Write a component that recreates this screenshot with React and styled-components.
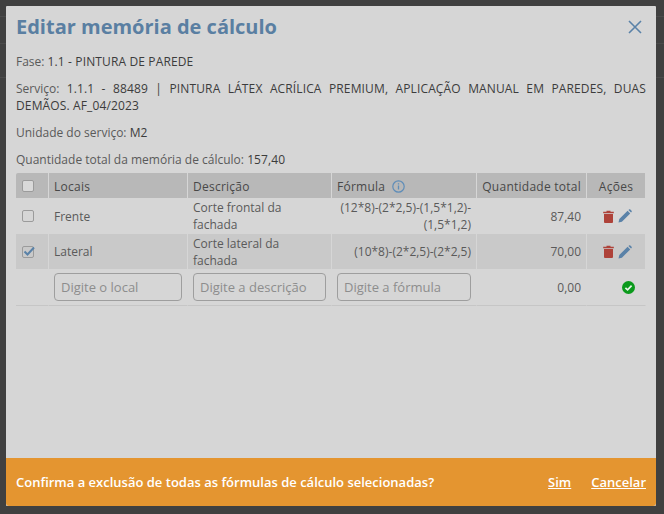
import React from "react";
import styled, { createGlobalStyle } from "styled-components";

const Global = createGlobalStyle`
  html, body { margin: 0; padding: 0; height: 100%; overflow: hidden; background: #3f3f3f; }
  * { box-sizing: border-box; }
`;
const Backdrop = styled.div`
  width: 664px; height: 514px; padding: 6px 8px 8px 6px;
  background:
    linear-gradient(#4b4b4b, #4b4b4b) 0 16px / 100% 1px no-repeat,
    linear-gradient(#4b4b4b, #4b4b4b) 0 43px / 100% 1px no-repeat,
    linear-gradient(#4b4b4b, #4b4b4b) 0 77px / 100% 1px no-repeat,
    #404040;
  font-family: "Open Sans", sans-serif; font-size: 12px; line-height: 17px; color: #5a5a5a;
`;
const Modal = styled.div`
  width: 650px; height: 500px; display: flex; flex-direction: column; background: #d6d6d6; border-radius: 1px;
`;
const Body = styled.div`flex: 1; padding: 8px 10px 0;`;
const Header = styled.div`display: flex; justify-content: space-between; align-items: center; height: 25px; margin-bottom: 14px;`;
const Title = styled.h1`margin: 0; font-size: 20px; line-height: 25px; font-weight: 700; color: #5a7fa2;`;
const Close = styled.button`border: 0; background: none; padding: 0; margin-right: 4px; width: 14px; height: 14px; display: flex; svg { display: block; }`;
const Info = styled.p`margin: 0 0 10px; text-align: ${p => p.$justify ? "justify" : "left"};`;
const Strong = styled.span`font-weight: 400; letter-spacing: 0.13px; color: #3c3c3c;`;
const Table = styled.div`
  margin-top: -5px; display: grid; grid-template-columns: 33px 139px 144px 145px 110px 59px;
`;
const Cell = styled.div`
  display: flex; align-items: center; padding: 0 5px; gap: 3px;
  border-right: 1px solid #d6d6d6;
  justify-content: ${p => p.$align === "right" ? "flex-end" : p.$align === "center" ? "center" : "flex-start"};
  text-align: ${p => p.$align || "left"};
`;
const Head = styled(Cell)`
  height: 25px; padding-top: 1px; background: #b8b8b8; font-weight: 400; letter-spacing: 0.25px; color: #484848;
  &:last-child { border-right: 0; border-top-right-radius: 2px; }
  &:first-child { border-top-left-radius: 2px; }
`;
const Data = styled(Cell)`
  height: ${p => p.$shade ? 36 : 35}px; background: ${p => p.$shade ? "#c9c9c9" : "transparent"};
  border-top: 1px solid #d6d6d6;
  padding-right: ${p => p.$wrap ? 25 : 5}px;
`;
const InputCell = styled(Cell)`height: 37px; border-bottom: 1px solid #c6c6c6;`;
const Box = styled.span`
  width: 12px; height: 12px; border: 1px solid #9b9b9b; border-radius: 2px; background: ${p => p.$light ? "#d9d9d9" : "transparent"};
  position: relative; display: block; margin-left: 1px;
  svg { position: absolute; left: -1px; top: -2px; }
`;
const Input = styled.input`
  width: 100%; height: 28px; border: 1px solid #9e9e9e; border-radius: 4px; background: transparent; padding: 0 6px;
  font: 13px "Open Sans", sans-serif; color: #4a4a4a;
  &::placeholder { color: #8d8d8d; opacity: 1; }
`;
const InfoIcon = styled.svg`margin-left: 4px; display: block;`;
const Actions = styled.div`display: flex; gap: 4px; align-items: center; justify-content: center; margin-left: 3px;`;
const Check = styled.svg`margin-right: 5px; margin-top: 1px; display: block;`;
const Confirm = styled.div`
  height: 48px; background: #e49530; color: #fff; display: flex; align-items: center; padding: 0 10px;
  font-weight: 600; font-size: 13px; border-radius: 0 0 3px 3px;
`;
const Question = styled.span`flex: 1;`;
const Link = styled.a`color: #fff; text-decoration: underline; margin-left: 20px; cursor: pointer;`;

const Trash = () => (
  <svg width="11" height="13" viewBox="0 0 11 13"><path d="M3.5.8h4v1h3.3v1.4H.2V1.8h3.3zM1 4h9v8a1 1 0 0 1-1 1H2a1 1 0 0 1-1-1z" fill="#ae4239"/></svg>
);
const Pencil = () => (
  <svg width="14" height="14" viewBox="0 0 14 14"><path d="M0.5 13.5l.8-3.4L9.6 1.8l2.6 2.6-8.3 8.3zM10.4 1l.7-.6c.4-.3.9-.3 1.2 0l1.3 1.3c.3.4.3.9 0 1.2l-.6.7z" fill="#5a82a8"/></svg>
);
const Row = ({ shade, checked, local, desc, formula, total }) => (
  <>
    <Data $shade={shade}><Box>{checked && <svg width="14" height="12" viewBox="0 0 14 12"><path d="M2.5 6.5l3 3 6.5-7" fill="none" stroke="#5a82a8" strokeWidth="2"/></svg>}</Box></Data>
    <Data $shade={shade}>{local}</Data>
    <Data $shade={shade} $wrap>{desc}</Data>
    <Data $shade={shade} $align="right">{formula}</Data>
    <Data $shade={shade} $align="right">{total}</Data>
    <Data $shade={shade} $align="center"><Actions><Trash /><Pencil /></Actions></Data>
  </>
);

export default function App() {
  return (
    <Backdrop>
      <Global />
      <Modal>
        <Body>
          <Header>
            <Title>Editar memória de cálculo</Title>
            <Close aria-label="Fechar"><svg width="14" height="14" viewBox="0 0 14 14"><path d="M1 1l12 12M13 1L1 13" stroke="#5a82a8" strokeWidth="1.6" fill="none"/></svg></Close>
          </Header>
          <Info>Fase: <Strong>1.1 - PINTURA DE PAREDE</Strong></Info>
          <Info $justify>Serviço: <Strong>1.1.1 - 88489 | PINTURA LÁTEX ACRÍLICA PREMIUM, APLICAÇÃO MANUAL EM PAREDES, DUAS DEMÃOS. AF_04/2023</Strong></Info>
          <Info>Unidade do serviço: <Strong>M2</Strong></Info>
          <Info>Quantidade total da memória de cálculo: <Strong>157,40</Strong></Info>
          <Table>
            <Head><Box $light /></Head>
            <Head>Locais</Head>
            <Head>Descrição</Head>
            <Head>Fórmula
              <InfoIcon width="13" height="13" viewBox="0 0 13 13"><circle cx="6.5" cy="6.5" r="5.7" fill="none" stroke="#5f8db8" strokeWidth="1.2"/><path d="M6.5 5.5v4M6.5 3.2v1.3" stroke="#5f8db8" strokeWidth="1.3"/></InfoIcon>
            </Head>
            <Head $align="right">Quantidade total</Head>
            <Head $align="center">Ações</Head>
            <Row local="Frente" desc="Corte frontal da fachada" formula="(12*8)-(2*2,5)-(1,5*1,2)-(1,5*1,2)" total="87,40" />
            <Row shade checked local="Lateral" desc="Corte lateral da fachada" formula="(10*8)-(2*2,5)-(2*2,5)" total="70,00" />
            <InputCell />
            <InputCell><Input placeholder="Digite o local" /></InputCell>
            <InputCell><Input placeholder="Digite a descrição" /></InputCell>
            <InputCell><Input placeholder="Digite a fórmula" /></InputCell>
            <InputCell $align="right">0,00</InputCell>
            <InputCell $align="right"><Check width="13" height="13" viewBox="0 0 13 13"><circle cx="6.5" cy="6.5" r="6.5" fill="#0b9a1c"/><path d="M3.4 6.8l2.2 2.1 4-4.2" fill="none" stroke="#e8f5e8" strokeWidth="1.7"/></Check></InputCell>
          </Table>
        </Body>
        <Confirm>
          <Question>Confirma a exclusão de todas as fórmulas de cálculo selecionadas?</Question>
          <Link>Sim</Link>
          <Link>Cancelar</Link>
        </Confirm>
      </Modal>
    </Backdrop>
  );
}
